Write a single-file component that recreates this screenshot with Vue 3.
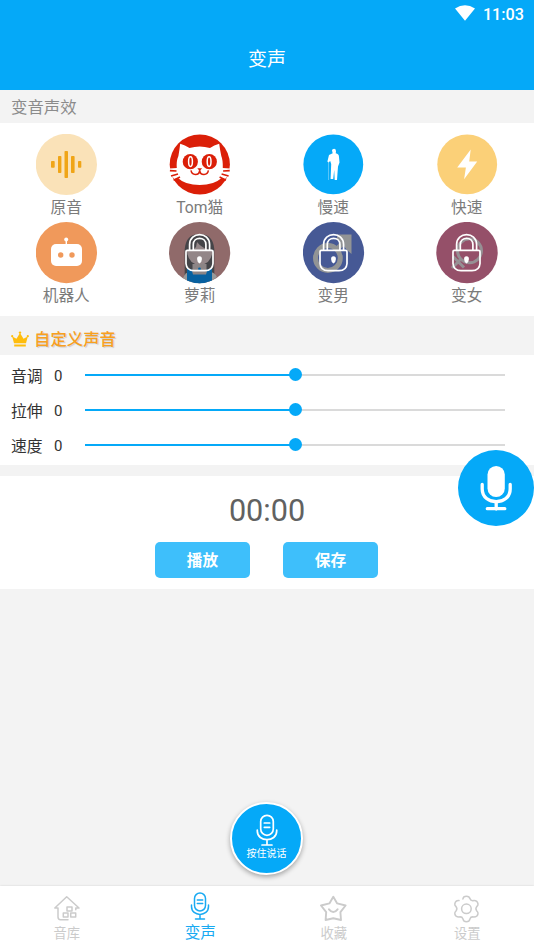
<script setup>
import { ref } from 'vue'

const effects = [
  { id: 'original', label: '原音' },
  { id: 'tom', label: 'Tom猫' },
  { id: 'slow', label: '慢速' },
  { id: 'fast', label: '快速' },
  { id: 'robot', label: '机器人' },
  { id: 'girl', label: '萝莉', locked: true },
  { id: 'male', label: '变男', locked: true },
  { id: 'female', label: '变女', locked: true }
]
const sliders = ref([
  { name: '音调', value: 0 },
  { name: '拉伸', value: 0 },
  { name: '速度', value: 0 }
])
const tabs = [
  { id: 'library', label: '音库' },
  { id: 'voice', label: '变声' },
  { id: 'favorite', label: '收藏' },
  { id: 'settings', label: '设置' }
]
const active = ref('voice')
</script>

<template>
  <div class="screen">
    <header class="top">
      <div class="status">
        <svg class="wifi" width="20" height="16" viewBox="0 0 20 16"><path d="M0 3.6Q10-3.2 20 3.6L10 15.8Z" fill="#fff" /></svg>
        <span>11:03</span>
      </div>
      <h1>变声</h1>
    </header>

    <h2 class="label">变音声效</h2>
    <section class="grid">
      <div v-for="e in effects" :key="e.id" class="effect">
        <svg width="62" height="62" viewBox="0 0 62 62">
          <g v-if="e.id === 'original'">
            <circle cx="30.4" cy="30.4" r="30.6" fill="#fae2b8" />
            <g fill="#f0a517">
              <rect x="15" y="27" width="3.7" height="6.8" rx=".8" />
              <rect x="22" y="22" width="3.4" height="17" rx=".8" />
              <rect x="28.5" y="17" width="3.5" height="27" rx=".8" />
              <rect x="35" y="22" width="3.6" height="17" rx=".8" />
              <rect x="42" y="27" width="3.3" height="6.8" rx=".8" />
            </g>
          </g>
          <g v-else-if="e.id === 'tom'">
            <circle cx="30.8" cy="30.5" r="30.1" fill="#db1f08" />
            <path d="M11.2 9.8Q16 11 20.5 14Q30.7 11 41 14Q45 11 50.2 9.8Q51 16 52.3 22Q54 26 53.8 34L61 34.5L60 41L56 45L52.6 44Q45 51 30.7 51Q16 51 9 44L5.5 45L1.6 41L.4 34.5L7.8 34Q7.2 27 9.4 22Q10.5 16 11.2 9.8Z" fill="#fff" />
            <path d="M.9 36.6L7.5 37M2 42L9 40M4.6 46.2L11 43M60.7 36.6L54.1 37M59.6 42L52.6 40M57 46.2L50.6 43" stroke="#db1f08" stroke-width="1.6" />
            <circle cx="21.3" cy="27.7" r="7.6" fill="#db1f08" />
            <circle cx="40.3" cy="27.7" r="7.6" fill="#db1f08" />
            <ellipse cx="21.5" cy="27.6" rx="1.9" ry="4.9" fill="none" stroke="#fff" stroke-width="1.5" />
            <ellipse cx="40.1" cy="27.6" rx="1.9" ry="4.9" fill="none" stroke="#fff" stroke-width="1.5" />
            <path d="M28.3 34.2H33.1L30.7 37Z" fill="#db1f08" />
            <path d="M22 36.4C22.8 41.5 30 42.2 30.7 36.3C31.4 42.2 38.6 41.5 39.4 36.4" fill="none" stroke="#db1f08" stroke-width="1.5" />
          </g>
          <g v-else-if="e.id === 'slow'">
            <circle cx="30.3" cy="30.4" r="29.9" fill="#05a9f8" />
            <path d="M29 16.6Q29 14.8 31.2 14.8Q33.2 15 33 17.5L32.7 19.3Q36 20 36 23L36.5 28.5L35 32.5L34 46H31.7L31.2 36L30.2 45H27.6L28.2 30L27.2 27L25.4 28.5L24.4 27.5L26 21L29.7 19.2Z" fill="#fff" />
            <path d="M25.3 27V46" stroke="#fff" stroke-width=".6" opacity=".7" />
          </g>
          <g v-else-if="e.id === 'fast'">
            <circle cx="31.2" cy="30.4" r="29.9" fill="#fbd078" />
            <path d="M34.7 15.5L21.2 33.6H29.9L28.1 45.3L41.2 27.4H33.2Z" fill="#fff" />
          </g>
          <g v-else-if="e.id === 'robot'">
            <circle cx="30.4" cy="30.6" r="30.6" fill="#f0995b" />
            <rect x="15" y="22" width="31" height="22" rx="5" fill="#fff" />
            <path d="M30.3 17V23" stroke="#fff" stroke-width="1.4" />
            <circle cx="30.2" cy="17.5" r="2" fill="#fff" />
            <circle cx="24.7" cy="33" r="2.7" fill="#f0995b" />
            <circle cx="36" cy="33" r="2.7" fill="#f0995b" />
          </g>
          <g v-else-if="e.id === 'girl'">
            <circle cx="30.6" cy="30.6" r="30.6" fill="#906a6a" />
            <path d="M15.7 54V27Q17 12 30.5 12Q44 12 45.3 27V54Z" fill="#444448" />
            <path d="M18 29Q24 29 27 25L28 20Q33 27 43.5 28Q43 42 30.7 43Q19 42 18 29Z" fill="#938688" />
            <path d="M14 56Q16 50 23 49H38Q46 50 48 55Q40 61.2 30.6 61.2Q21 61.2 14 56Z" fill="#999" />
            <path d="M23.5 42H37.5V53H23.5Z" fill="#8c8586" />
            <path d="M18 58.5V47H22.5L24 52.5H37L38.5 47H43V58.5Q37 61.2 30.6 61.2Q24 61.2 18 58.5Z" fill="#0861a0" />
            <circle cx="30.5" cy="47" r="1.4" fill="#0861a0" />
          </g>
          <g v-else-if="e.id === 'male'">
            <circle cx="30.5" cy="30.6" r="30.6" fill="#465995" />
            <g fill="none" stroke="#929495" stroke-width="5">
              <circle cx="24.9" cy="36" r="12.4" />
              <path d="M33 28L42 19" />
            </g>
            <path d="M34 12.5H48.5V32L44 28L40 23L34 17Z" fill="#929495" />
          </g>
          <g v-else>
            <circle cx="31" cy="30.6" r="30.7" fill="#955069" />
            <g fill="none" stroke="#969094" stroke-width="3">
              <circle cx="33.5" cy="28.8" r="12" />
              <path d="M25 37L16 46M17 34.5L28 45.5" />
            </g>
          </g>
          <g v-if="e.locked" fill="none" stroke="#fff" stroke-width="1.7" stroke-linejoin="round">
            <path d="M20.6 28V22.5C20.6 9.3 40.6 9.3 40.6 22.5V28M24.3 28V22.5C24.3 14.2 36.9 14.2 36.9 22.5V28" />
            <path d="M18.2 28.4H42.7Q44 28.4 44 29.7V41.5Q43.5 48.7 36 48.7H25Q17.5 48.7 17 41.5V29.7Q17 28.4 18.2 28.4Z" />
            <path d="M30.5 34.3Q33.1 34.5 32.9 37.2Q32.7 40.5 30.5 41.6Q28.3 40.5 28.1 37.2Q27.9 34.5 30.5 34.3Z" fill="#fff" stroke="none" />
          </g>
        </svg>
        <span>{{ e.label }}</span>
      </div>
    </section>

    <h2 class="custom">
      <svg width="20" height="17" viewBox="0 0 20 17" fill="#ffbd0c"><path d="M4 12.3L2.2 5.4L6.5 7.8L10 2L13.5 7.8L17.8 5.4L16 12.3Z M4.2 13.4H15.8V15.6H4.2Z" /><circle cx="2.2" cy="5.2" r="1.1" /><circle cx="10" cy="1.6" r="1.2" /><circle cx="17.8" cy="5.2" r="1.1" /></svg>
      <span>自定义声音</span>
    </h2>
    <section class="sliders">
      <div v-for="s in sliders" :key="s.name" class="row">
        <span class="name">{{ s.name }}</span><span class="value">{{ s.value }}</span>
        <div class="track"><i class="fill"></i><i class="knob"></i><i class="rest"></i></div>
      </div>
    </section>

    <section class="recorder">
      <div class="time">00:00</div>
      <div class="buttons"><button>播放</button><button>保存</button></div>
    </section>

    <div class="float">
      <svg width="76" height="76" viewBox="0 0 76 76"><rect x="29.5" y="16" width="17.3" height="31" rx="8.6" fill="#fff" /><path d="M24.2 34.5V39C24.2 56 52.2 56 52.2 39V34.5M38.2 52V59M29.3 58.7H46.8" fill="none" stroke="#fff" stroke-width="3.3" stroke-linecap="round" /></svg>
    </div>

    <main class="stage">
      <div class="hold">
        <svg width="22" height="33" viewBox="0 0 22 33" fill="none" stroke="#fff" stroke-width="1.7" stroke-linecap="round"><rect x="4.7" y="1.3" width="12.6" height="20" rx="6.3" /><path d="M1.3 16V17C1.3 28.6 20.7 28.6 20.7 17V16M11 26V31M6 31H16M8.3 9H13.7M8.3 13.3H13.7" /></svg>
        <span>按住说话</span>
      </div>
    </main>

    <nav class="tabs">
      <div v-for="t in tabs" :key="t.id" class="tab" :class="{ active: t.id === active }">
        <svg width="28" height="28" viewBox="0 0 28 28" fill="none" stroke="currentColor" stroke-width="1.5" stroke-linejoin="round" stroke-linecap="round">
          <path v-if="t.id === 'library'" d="M5 13H1.8L13.7 1.8L26 13H22.8V14.8M5 13V22Q5 24.7 7.5 24.7H15M14 12H19V16H14ZM10.3 18H15V22H10.3ZM17.7 18H22.7V22H17.7Z" />
          <g v-else-if="t.id === 'voice'"><rect x="8.5" y="1" width="11" height="18" rx="5.5" /><path d="M5.5 13V14.5C5.5 25 22.5 25 22.5 14.5V13M14 22.5V27M9.5 27H18.5M11.3 8H16.7M11.3 11.5H16.7" /></g>
          <path v-else-if="t.id === 'favorite'" stroke-width="1.9" d="M13.3 1.8L17.2 8.4L25.6 10.5L20.4 17.2L21 25L13.3 23.2L5.6 25L6.2 17.2L1 10.5L9.4 8.4ZM9 14.3Q13.3 19.8 17.6 14.3" />
          <g v-else><path d="M6 5.6Q2.5 5.3 1.8 9Q1.6 10.6 3 11.5Q4.8 13.8 3 16Q1.6 17.2 1.8 18.8Q2.5 22.1 6 22Q9 21.4 9.9 23.8Q10.5 26.7 13.4 26.7Q16.4 26.7 17 23.8Q17.8 21.4 20.8 22Q24.3 22.1 25 18.8Q25.2 17.2 23.8 16Q22 13.8 23.8 11.5Q25.2 10.6 25 9Q24.3 5.4 20.8 5.6Q17.8 6.3 17 3.8Q16.4 1.2 13.4 1.2Q10.2 1.2 9.9 4" /><circle cx="13.4" cy="13.8" r="4.8" /></g>
        </svg>
        <span>{{ t.label }}</span>
      </div>
    </nav>
  </div>
</template>

<style>
body { background: #f3f3f3; }
</style>

<style scoped>
* { box-sizing: border-box; }
.screen {
  position: relative;
  width: 534px;
  height: 949px;
  display: flex;
  flex-direction: column;
  overflow: hidden;
  background: #f3f3f3;
  font-family: Roboto, "Noto Sans CJK SC", sans-serif;
}
h1, h2 { margin: 0; font-weight: 400; }
.top { height: 90px; flex: none; background: #05a9f8; color: #fff; }
.status {
  height: 30px;
  display: flex;
  justify-content: flex-end;
  align-items: center;
  gap: 8px;
  padding-right: 10px;
  font-size: 16.2px;
  font-weight: 500;
  line-height: 30px;
}
.wifi { margin-top: -4px; }
h1 { height: 60px; font-size: 19px; line-height: 60px; text-align: center; }
.label { height: 33px; flex: none; padding-left: 11px; font-size: 16.4px; line-height: 36px; color: #8b8b8b; }
.grid {
  height: 193px;
  flex: none;
  display: grid;
  grid-template-columns: repeat(4, 1fr);
  grid-auto-rows: 88px;
  padding-top: 11px;
  background: #fff;
}
.effect { display: flex; flex-direction: column; align-items: center; color: #7b7b7b; font-size: 15.7px; line-height: 24px; }
.effect svg { display: block; flex: none; }
.effect span { margin-right: 1px; }
.custom {
  height: 39px;
  flex: none;
  display: flex;
  align-items: center;
  gap: 4px;
  padding: 7px 0 0 10px;
  color: #f8a01f;
  font-size: 16.4px;
  font-weight: 500;
  line-height: 32px;
  text-shadow: 1px 1px 1px #ccc;
}
.custom span { padding-top: 2px; }
.sliders { height: 110px; flex: none; padding-top: 2px; background: #fff; }
.row { height: 35px; display: flex; align-items: center; padding: 0 29px 0 11px; color: #333; }
.name, .value { height: 35px; line-height: 37px; padding-top: 1px; }
.name { width: 43px; font-size: 15.8px; }
.value { width: 31px; font-size: 15px; }
.track { flex: 1; display: flex; align-items: center; }
.fill, .rest { flex: 1; height: 2px; background: #05a9f8; }
.rest { background: #dadada; }
.knob { width: 13px; height: 13px; margin: 0 -6.5px; border-radius: 50%; background: #05a9f8; z-index: 1; }
.recorder { height: 113px; flex: none; margin-top: 11px; background: #fff; }
.time { height: 66px; color: #616161; font-size: 30.6px; line-height: 69px; text-align: center; }
.buttons { display: flex; justify-content: center; gap: 33px; padding-right: 1px; }
button {
  width: 95px;
  height: 36px;
  padding: 0;
  border: 0;
  border-radius: 5px;
  background: #3ebffb;
  color: #fff;
  font: 700 15.7px/38px Roboto, "Noto Sans CJK SC", sans-serif;
}
button::first-line { line-height: 38px; }
.float { position: absolute; right: 0; top: 450px; width: 76px; height: 76px; border-radius: 50%; background: #05a9f8; z-index: 2; }
.stage { flex: 1; display: flex; justify-content: center; align-items: flex-end; padding: 0 1px 11px 0; }
.hold {
  width: 73px;
  height: 73px;
  display: flex;
  flex-direction: column;
  align-items: center;
  padding-top: 10px;
  border: 2px solid #fff;
  border-radius: 50%;
  background: #05a9f8;
  color: #fff;
  font-size: 10px;
  line-height: 14px;
  box-shadow: 0 2px 5px #0005;
}
.tabs { height: 63px; flex: none; display: grid; grid-template-columns: repeat(4, 1fr); background: #fff; box-shadow: 0 0 2px #0002; }
.tab { display: flex; flex-direction: column; align-items: center; padding-top: 9px; color: #cbcbcb; font-size: 13.3px; line-height: 22px; }
.tab svg { display: block; flex: none; }
.tab.active { padding-top: 6px; color: #19aaf2; font-size: 15.6px; line-height: 26px; }
</style>
